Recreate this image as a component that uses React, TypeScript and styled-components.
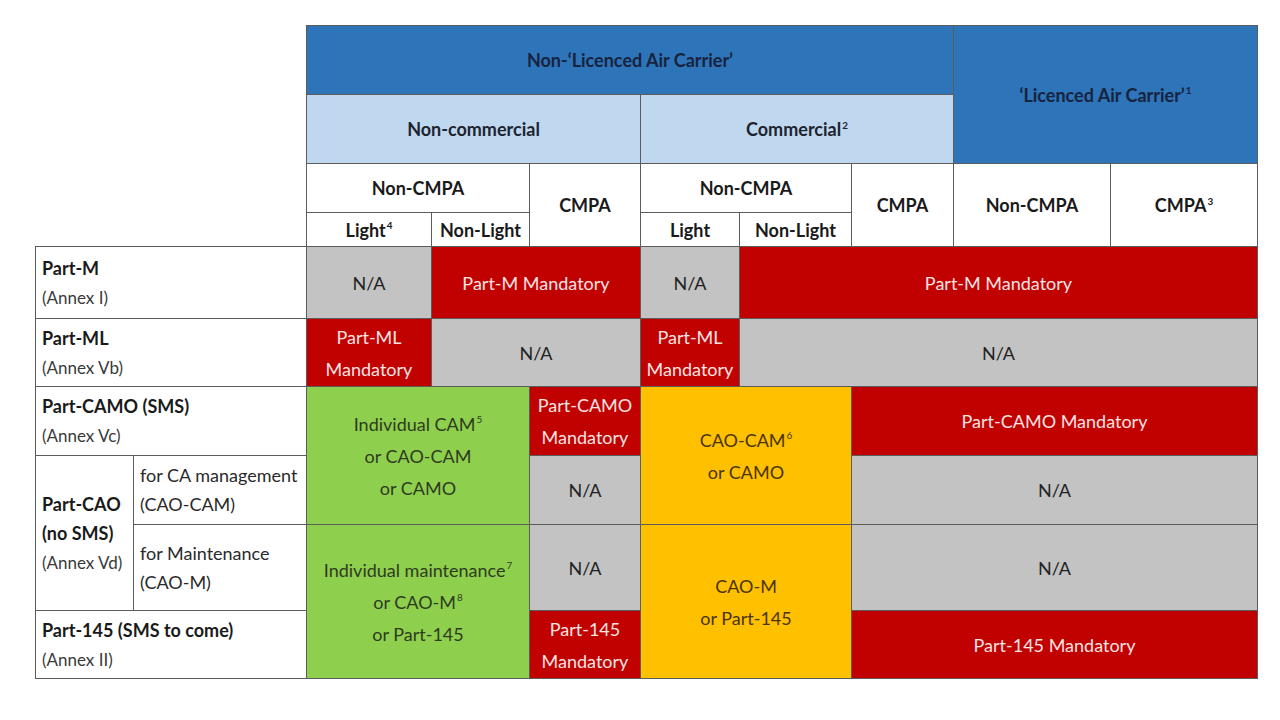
import React from "react";
import styled, { createGlobalStyle, css } from "styled-components";

const Global = createGlobalStyle`
  html, body { margin: 0; padding: 0; background: #ffffff; }
  body { font-family: Lato, "Open Sans", "Liberation Sans", sans-serif; }
`;

const Page = styled.div`
  width: 1280px;
  height: 720px;
  padding: 25px 0 0 35px;
  box-sizing: border-box;
  background: #ffffff;
`;

const Grid = styled.div`
  display: grid;
  grid-template-columns: 97px 172px 124px 97px 110px 98px 111px 101px 156px 146px;
  grid-template-rows: 68px 68px 48px 33px 71px 67px 68px 68px 85px 67px;
  gap: 1px;
  padding: 1px;
  background: #5c5c5c;
  width: max-content;
`;

type Tone = "white" | "dark" | "light" | "red" | "gray" | "green" | "yellow";

const tones: Record<Tone, ReturnType<typeof css>> = {
  white: css`background: #ffffff; color: #1a1a1a;`,
  dark: css`background: #2e74b8; color: #17233f;`,
  light: css`background: #c0d8ef; color: #1d2430;`,
  red: css`background: #c10000; color: #fbe3e3;`,
  gray: css`background: #c3c3c3; color: #222222;`,
  green: css`background: #8fcf4e; color: #2e3b20;`,
  yellow: css`background: #ffc000; color: #4a3400;`,
};

const Cell = styled.div<{ $c: string; $r: string; $tone: Tone; $bold?: boolean }>`
  grid-column: ${(p) => p.$c};
  grid-row: ${(p) => p.$r};
  display: flex;
  align-items: center;
  justify-content: center;
  flex-direction: column;
  text-align: center;
  font-size: 18px;
  line-height: 32px;
  font-weight: ${(p) => (p.$bold ? 700 : 400)};
  ${(p) => tones[p.$tone]}
`;

const Corner = styled.div`
  grid-column: 1 / 3;
  grid-row: 1 / 5;
  background: #ffffff;
  margin: -1px 0 0 -1px;
`;

const RowHead = styled.div<{ $c: string; $r: string }>`
  grid-column: ${(p) => p.$c};
  grid-row: ${(p) => p.$r};
  background: #ffffff;
  display: flex;
  flex-direction: column;
  justify-content: center;
  padding: 0 6px;
  line-height: 29px;
  color: #1a1a1a;
`;

const Title = styled.span`
  font-weight: 700;
  font-size: 18px;
`;

const Sub = styled.span`
  font-size: 17px;
  color: #3a3a3a;
`;

const Plain = styled.span`
  font-size: 18px;
  color: #2a2a2a;
`;

const Sup = styled.sup`
  font-size: 0.55em;
  line-height: 0;
  vertical-align: 0.75em;
  margin-left: 1px;
`;

export default function App() {
  return (
    <Page>
      <Global />
      <Grid>
        <Corner />
        <Cell $c="3 / 9" $r="1" $tone="dark" $bold>Non-‘Licenced Air Carrier’</Cell>
        <Cell $c="9 / 11" $r="1 / 3" $tone="dark" $bold>
          <span>‘Licenced Air Carrier’<Sup>1</Sup></span>
        </Cell>
        <Cell $c="3 / 6" $r="2" $tone="light" $bold>Non-commercial</Cell>
        <Cell $c="6 / 9" $r="2" $tone="light" $bold>
          <span>Commercial<Sup>2</Sup></span>
        </Cell>
        <Cell $c="3 / 5" $r="3" $tone="white" $bold>Non-CMPA</Cell>
        <Cell $c="5" $r="3 / 5" $tone="white" $bold>CMPA</Cell>
        <Cell $c="6 / 8" $r="3" $tone="white" $bold>Non-CMPA</Cell>
        <Cell $c="8" $r="3 / 5" $tone="white" $bold>CMPA</Cell>
        <Cell $c="9" $r="3 / 5" $tone="white" $bold>Non-CMPA</Cell>
        <Cell $c="10" $r="3 / 5" $tone="white" $bold>
          <span>CMPA<Sup>3</Sup></span>
        </Cell>
        <Cell $c="3" $r="4" $tone="white" $bold>
          <span>Light<Sup>4</Sup></span>
        </Cell>
        <Cell $c="4" $r="4" $tone="white" $bold>Non-Light</Cell>
        <Cell $c="6" $r="4" $tone="white" $bold>Light</Cell>
        <Cell $c="7" $r="4" $tone="white" $bold>Non-Light</Cell>

        <RowHead $c="1 / 3" $r="5">
          <Title>Part-M</Title>
          <Sub>(Annex I)</Sub>
        </RowHead>
        <RowHead $c="1 / 3" $r="6">
          <Title>Part-ML</Title>
          <Sub>(Annex Vb)</Sub>
        </RowHead>
        <RowHead $c="1 / 3" $r="7">
          <Title>Part-CAMO (SMS)</Title>
          <Sub>(Annex Vc)</Sub>
        </RowHead>
        <RowHead $c="1" $r="8 / 10">
          <Title>Part-CAO</Title>
          <Title>(no SMS)</Title>
          <Sub>(Annex Vd)</Sub>
        </RowHead>
        <RowHead $c="2" $r="8">
          <Plain>for CA management</Plain>
          <Plain>(CAO-CAM)</Plain>
        </RowHead>
        <RowHead $c="2" $r="9">
          <Plain>for Maintenance</Plain>
          <Plain>(CAO-M)</Plain>
        </RowHead>
        <RowHead $c="1 / 3" $r="10">
          <Title>Part-145 (SMS to come)</Title>
          <Sub>(Annex II)</Sub>
        </RowHead>

        <Cell $c="3" $r="5" $tone="gray">N/A</Cell>
        <Cell $c="4 / 6" $r="5" $tone="red">Part-M Mandatory</Cell>
        <Cell $c="6" $r="5" $tone="gray">N/A</Cell>
        <Cell $c="7 / 11" $r="5" $tone="red">Part-M Mandatory</Cell>

        <Cell $c="3" $r="6" $tone="red"><span>Part-ML</span><span>Mandatory</span></Cell>
        <Cell $c="4 / 6" $r="6" $tone="gray">N/A</Cell>
        <Cell $c="6" $r="6" $tone="red"><span>Part-ML</span><span>Mandatory</span></Cell>
        <Cell $c="7 / 11" $r="6" $tone="gray">N/A</Cell>

        <Cell $c="3 / 5" $r="7 / 9" $tone="green">
          <span>Individual CAM<Sup>5</Sup></span>
          <span>or CAO-CAM</span>
          <span>or CAMO</span>
        </Cell>
        <Cell $c="5" $r="7" $tone="red"><span>Part-CAMO</span><span>Mandatory</span></Cell>
        <Cell $c="6 / 8" $r="7 / 9" $tone="yellow">
          <span>CAO-CAM<Sup>6</Sup></span>
          <span>or CAMO</span>
        </Cell>
        <Cell $c="8 / 11" $r="7" $tone="red">Part-CAMO Mandatory</Cell>

        <Cell $c="5" $r="8" $tone="gray">N/A</Cell>
        <Cell $c="8 / 11" $r="8" $tone="gray">N/A</Cell>

        <Cell $c="3 / 5" $r="9 / 11" $tone="green">
          <span>Individual maintenance<Sup>7</Sup></span>
          <span>or CAO-M<Sup>8</Sup></span>
          <span>or Part-145</span>
        </Cell>
        <Cell $c="5" $r="9" $tone="gray">N/A</Cell>
        <Cell $c="6 / 8" $r="9 / 11" $tone="yellow">
          <span>CAO-M</span>
          <span>or Part-145</span>
        </Cell>
        <Cell $c="8 / 11" $r="9" $tone="gray">N/A</Cell>

        <Cell $c="5" $r="10" $tone="red"><span>Part-145</span><span>Mandatory</span></Cell>
        <Cell $c="8 / 11" $r="10" $tone="red">Part-145 Mandatory</Cell>
      </Grid>
    </Page>
  );
}
